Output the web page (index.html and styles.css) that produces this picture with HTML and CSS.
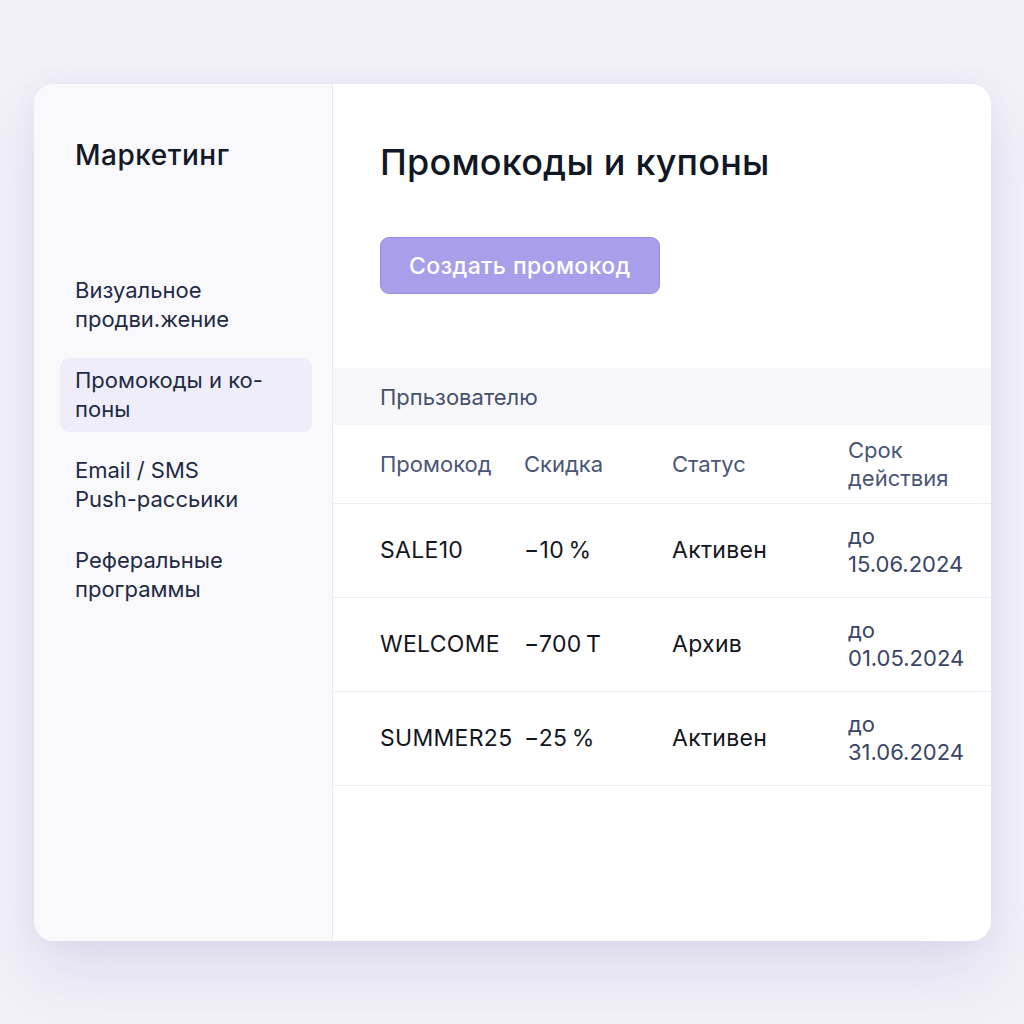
FILE: index.html
```html
<!DOCTYPE html>
<html lang="ru">

<head>
    <meta charset="UTF-8">
    <meta name="viewport" content="width=device-width, initial-scale=1.0">
    <title>Маркетинг — Промокоды и купоны</title>
    <link rel="stylesheet" href="styles.css">
</head>

<body>
    <div class="card">
        <aside class="sidebar">
            <div class="sidebar-title">Маркетинг</div>
            <nav class="nav">
                <div class="nav-item">Визуальное<br>продви.жение</div>
                <div class="nav-item active">Промокоды и ко-<br>поны</div>
                <div class="nav-item">Email / SMS<br>Push-рассьики</div>
                <div class="nav-item">Реферальные<br>программы</div>
            </nav>
        </aside>

        <main class="content">
            <h1 class="page-title">Промокоды и купоны</h1>
            <div class="actions">
                <button class="btn-primary">Создать промокод</button>
            </div>

            <div class="filter-band">Прпьзователю</div>

            <table class="promo-table">
                <colgroup>
                    <col class="col-code">
                    <col class="col-discount">
                    <col class="col-status">
                    <col>
                </colgroup>
                <thead>
                    <tr>
                        <th>Промокод</th>
                        <th>Скидка</th>
                        <th>Статус</th>
                        <th>Срок<br>действия</th>
                    </tr>
                </thead>
                <tbody>
                    <tr>
                        <td>SALE10</td>
                        <td>−10&#8201;%</td>
                        <td>Активен</td>
                        <td class="date">до<br>15.06.2024</td>
                    </tr>
                    <tr>
                        <td>WELCOME</td>
                        <td>−700&#8201;T</td>
                        <td>Архив</td>
                        <td class="date">до<br>01.05.2024</td>
                    </tr>
                    <tr>
                        <td>SUMMER25</td>
                        <td>−25&#8201;%</td>
                        <td>Активен</td>
                        <td class="date">до<br>31.06.2024</td>
                    </tr>
                </tbody>
            </table>
        </main>
    </div>
</body>

</html>
```

FILE: styles.css
```css
* {
    box-sizing: border-box;
}

html {
    background-color: #f2f1f8;
}

body {
    margin: 0;
    min-height: 1024px;
    padding: 84px 0 0 34px;
    background-color: #f2f1f8;
    font-family: "Inter", "Noto Sans", sans-serif;
    color: #151a26;
}

.card {
    display: flex;
    width: 957px;
    height: 857px;
    background-color: #ffffff;
    border-radius: 20px;
    overflow: hidden;
    box-shadow: 0 32px 60px rgba(105, 95, 180, 0.14), 0 0 24px rgba(105, 95, 180, 0.06);
}

/* sidebar */
.sidebar {
    width: 299px;
    flex-shrink: 0;
    background-color: #f9f9fc;
    border-right: 1px solid #e9e9f1;
    padding: 54px 20px 0 26px;
}

.sidebar-title {
    padding-left: 15px;
    font-size: 28px;
    line-height: 34px;
    font-weight: 500;
    color: #121826;
    letter-spacing: 0.5px;
}

.nav {
    display: flex;
    flex-direction: column;
    gap: 16px;
    margin-top: 96px;
}

.nav-item {
    padding: 8px 15px;
    border-radius: 9px;
    font-size: 22px;
    line-height: 29px;
    color: #1f2a44;
}

.nav-item.active {
    background-color: #eeedf9;
}

/* main content */
.content {
    flex: 1;
    padding-top: 57px;
}

.page-title {
    margin: 0;
    padding-left: 47px;
    font-size: 36px;
    line-height: 42px;
    font-weight: 500;
    color: #111724;
    letter-spacing: 0.2px;
}

.actions {
    padding-left: 47px;
    margin-top: 54px;
}

.btn-primary {
    height: 57px;
    padding: 0 28px;
    border: 1px solid #988de3;
    border-radius: 9px;
    background-color: #a89feb;
    color: #ffffff;
    font-family: inherit;
    font-size: 23px;
    font-weight: 500;
    letter-spacing: 0.4px;
}

.filter-band {
    margin-top: 74px;
    height: 57px;
    padding-left: 47px;
    display: flex;
    align-items: center;
    background-color: #f8f8fb;
    font-size: 22px;
    color: #46506d;
}

.promo-table {
    width: 100%;
    border-collapse: collapse;
    table-layout: fixed;
}

.col-code {
    width: 191px;
}

.col-discount {
    width: 148px;
}

.col-status {
    width: 176px;
}

.promo-table th,
.promo-table td {
    padding: 0;
    text-align: left;
    vertical-align: middle;
    font-size: 22px;
    line-height: 28px;
    white-space: nowrap;
}

.promo-table th:first-child,
.promo-table td:first-child {
    padding-left: 47px;
}

.promo-table th {
    height: 78px;
    font-weight: 400;
    color: #4a5576;
}

.promo-table td {
    height: 94px;
    border-top: 1px solid #eeeef4;
    color: #14161d;
    font-size: 23px;
    letter-spacing: 0.3px;
}

.promo-table tbody tr:last-child td {
    border-bottom: 1px solid #eeeef4;
}

.promo-table td.date {
    color: #3a4566;
    font-size: 22px;
    letter-spacing: 0;
}
```
